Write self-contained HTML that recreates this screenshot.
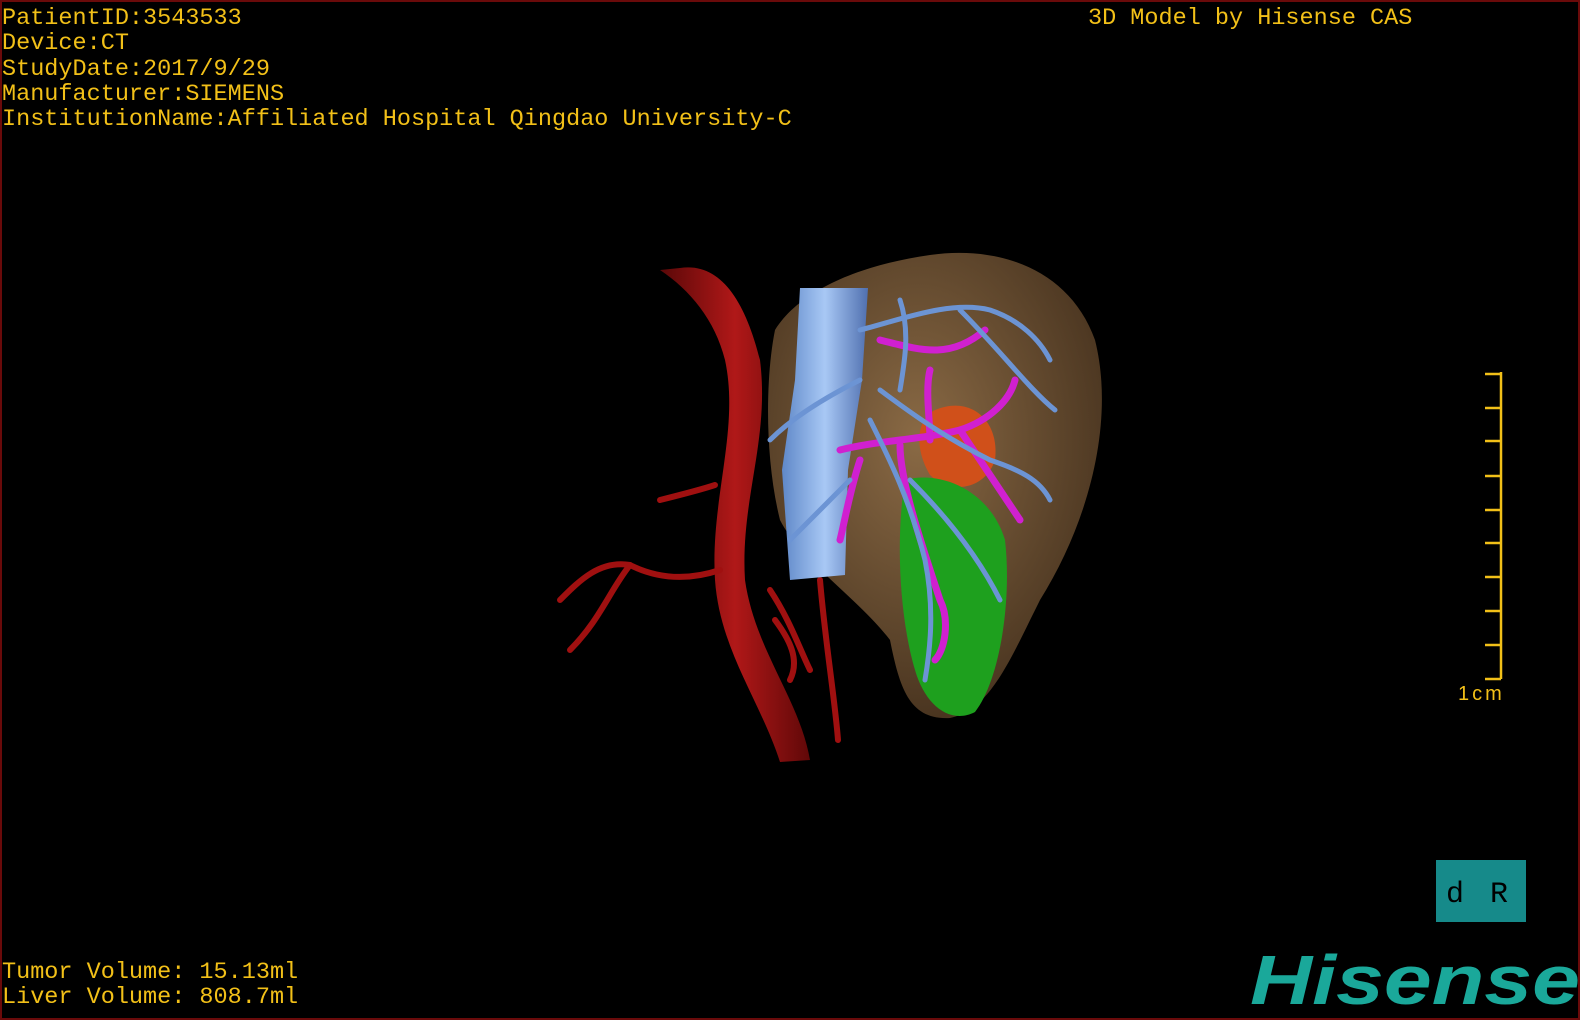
<!DOCTYPE html>
<html><head><meta charset="utf-8"><style>
html,body{margin:0;padding:0;background:#000}
#c{position:relative;width:1580px;height:1020px;background:#000;overflow:hidden;box-sizing:border-box;border:2px solid #6a0a0a;font-family:"Liberation Mono",monospace;color:#f2c018}
.t{position:absolute;font-size:23.5px;line-height:25.3px;white-space:pre;letter-spacing:0}
</style></head><body><div id="c">
<div class="t" style="left:0;top:4px">PatientID:3543533
Device:CT
StudyDate:2017/9/29
Manufacturer:SIEMENS
InstitutionName:Affiliated Hospital Qingdao University-C</div>
<div class="t" style="left:1086px;top:4px">3D Model by Hisense CAS</div>
<div class="t" style="left:0;top:958px">Tumor Volume: 15.13ml
Liver Volume: 808.7ml</div>
<svg width="1580" height="1020" style="position:absolute;left:-2px;top:-2px">
<defs>
<radialGradient id="lv" cx="0.45" cy="0.4" r="0.6"><stop offset="0" stop-color="#8a6a45"/><stop offset="1" stop-color="#4a3520"/></radialGradient>
<linearGradient id="ao" x1="0" x2="1"><stop offset="0" stop-color="#5a0808"/><stop offset="0.5" stop-color="#b01818"/><stop offset="1" stop-color="#600808"/></linearGradient>
<linearGradient id="iv" x1="0" x2="1"><stop offset="0" stop-color="#5f88c8"/><stop offset="0.5" stop-color="#a8c8f5"/><stop offset="1" stop-color="#5070b0"/></linearGradient>
</defs>
<path d="M775 330 C800 290 860 265 930 255 C1000 245 1070 270 1095 340 C1115 420 1090 520 1040 600 C1010 660 990 710 950 718 C910 720 900 690 890 640 C860 600 800 560 780 520 C765 460 765 380 775 330Z" fill="url(#lv)"/>
<path d="M935 410 C970 395 1000 420 995 460 C985 490 950 495 930 475 C915 450 915 420 935 410Z" fill="#d0501a"/>
<path d="M905 480 C940 470 990 490 1005 540 C1012 600 1000 680 975 712 C950 725 925 705 915 670 C900 620 895 540 905 480Z" fill="#1ea01e"/>
<path d="M680 268 C720 262 745 300 760 360 C770 440 740 500 745 580 C755 650 800 700 810 760 L780 762 C760 700 720 650 715 580 C710 500 740 430 725 360 C715 320 690 290 660 270Z" fill="url(#ao)"/>
<g stroke="#a01010" stroke-width="6" fill="none" stroke-linecap="round">
<path d="M720 570 C690 580 660 580 630 565 C600 560 580 580 560 600"/>
<path d="M630 565 C610 590 600 620 570 650"/>
<path d="M715 485 C700 490 680 495 660 500"/>
<path d="M770 590 C790 620 800 650 810 670"/>
<path d="M820 580 C825 640 835 700 838 740"/>
<path d="M775 620 C790 640 800 660 790 680"/>
</g>
<path d="M800 288 L868 288 L862 380 L848 470 L845 575 L790 580 L782 470 L795 380Z" fill="url(#iv)"/>
<g stroke="#d020d0" stroke-width="7" fill="none" stroke-linecap="round">
<path d="M840 450 C880 440 920 440 960 430 C990 420 1010 400 1015 380"/>
<path d="M930 440 C930 420 925 390 930 370"/>
<path d="M960 430 C980 460 1000 490 1020 520"/>
<path d="M900 445 C900 480 920 540 940 600 C950 620 945 650 935 660"/>
<path d="M880 340 C920 350 950 360 985 330"/>
<path d="M860 460 C850 490 845 520 840 540"/>
</g>
<g stroke="#6c94d4" stroke-width="5" fill="none" stroke-linecap="round">
<path d="M860 330 C900 320 950 300 990 310 C1020 320 1040 340 1050 360"/>
<path d="M880 390 C920 420 950 440 990 460 C1020 470 1040 480 1050 500"/>
<path d="M870 420 C890 460 910 500 925 560 C935 610 930 650 925 680"/>
<path d="M860 380 C820 400 790 420 770 440"/>
<path d="M900 300 C910 330 905 360 900 390"/>
<path d="M960 310 C1000 350 1030 390 1055 410"/>
<path d="M910 480 C950 520 980 560 1000 600"/>
<path d="M850 480 C830 500 810 520 790 540"/>
</g>
<g stroke="#f2c018" stroke-width="2.5" fill="none">
<path d="M1501 372 V679"/>
<path d="M1485 374H1501M1485 408H1501M1485 441H1501M1485 476H1501M1485 510H1501M1485 543H1501M1485 577H1501M1485 611H1501M1485 645H1501M1485 679H1501"/>
</g>
<text x="1458" y="700" fill="#f2c018" font-family="Liberation Sans" font-size="20" letter-spacing="3">1cm</text>
<rect x="1436" y="860" width="90" height="62" fill="#168a8a"/>
<text x="1446" y="902" fill="#000" font-family="Liberation Mono" font-size="30">d</text>
<text x="1490" y="902" fill="#000" font-family="Liberation Mono" font-size="30">R</text>
<text x="1250" y="1004" fill="#1aa89a" font-family="Liberation Sans" font-weight="bold" font-style="italic" font-size="70" textLength="330" lengthAdjust="spacingAndGlyphs">Hisense</text>
</svg>
</div></body></html>
